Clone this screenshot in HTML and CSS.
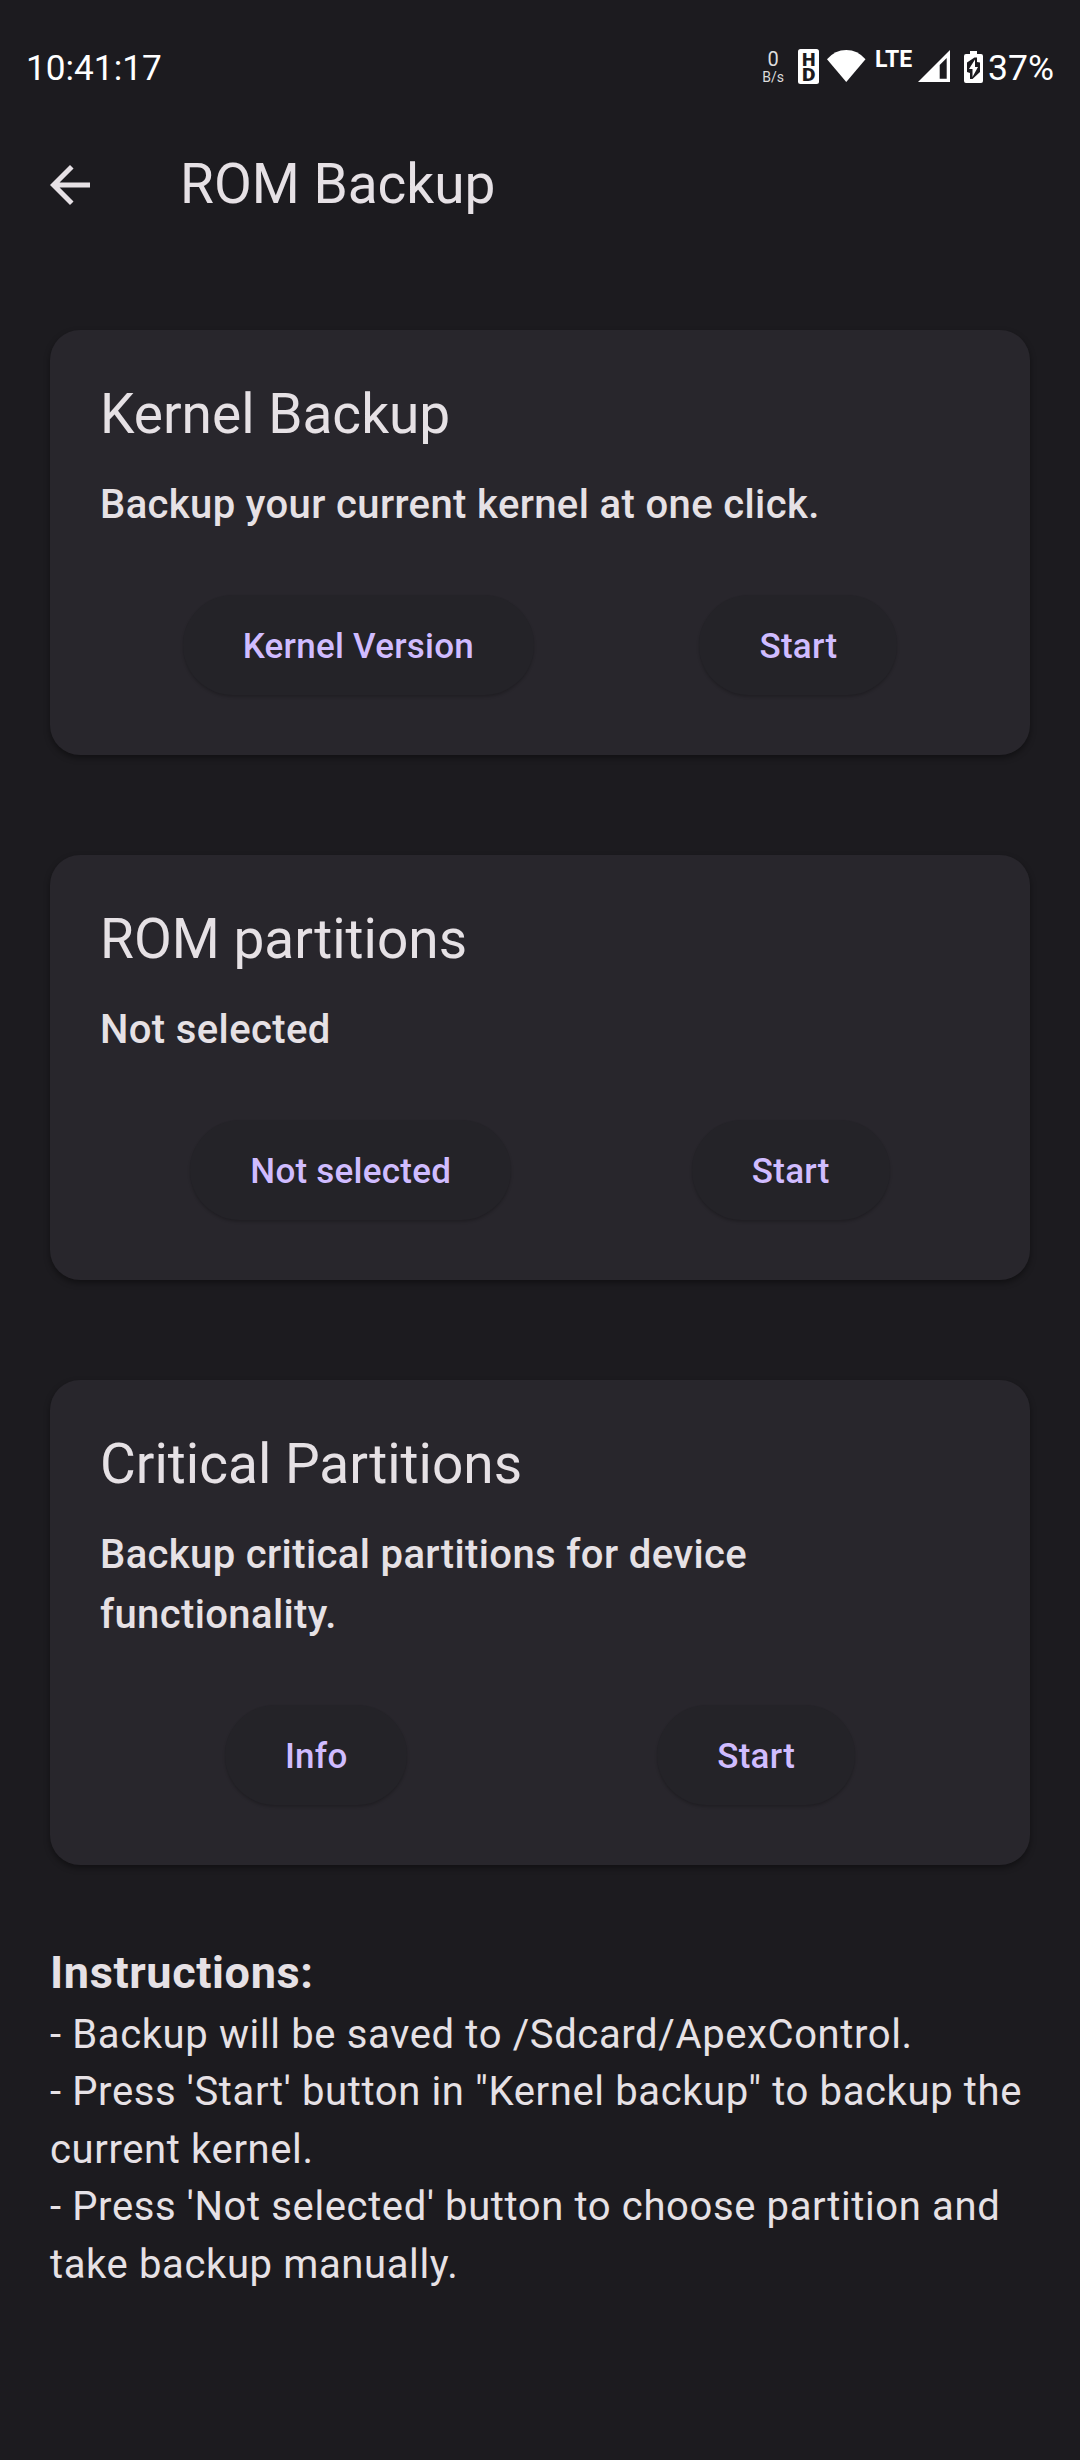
FILE: index.html
```html
<!DOCTYPE html>
<html lang="en">
<head>
<meta charset="utf-8">
<title>ROM Backup</title>
<link rel="stylesheet" href="styles.css">
</head>
<body>
<header class="status">
  <span class="clock">10:41:17</span>
  <div class="indicators">
    <span class="speed"><b>0</b><small>B/s</small></span>
    <svg class="hd" width="21" height="35" viewBox="0 0 21 35"><rect width="21" height="35" rx="2.500" fill="#fff"/><text x="4" y="16.600" textLength="13.500" lengthAdjust="spacingAndGlyphs">H</text><text x="4" y="32.300" textLength="13.500" lengthAdjust="spacingAndGlyphs">D</text></svg>
    <svg class="wifi" width="38.500" height="32" viewBox="0 0 38.500 32"><path d="M0 9.200Q8 0 19.250 0T38.500 9.200L19.250 32z" fill="#fff"/></svg>
    <span class="lte">LTE</span>
    <svg class="signal" width="32" height="32" viewBox="0 0 32 32"><path d="M32 0v32H0z" fill="#fff"/><path d="M28.700 8v20.700h-7V15z" fill="#1c1b1f"/></svg>
    <svg class="battery" width="19" height="32" viewBox="0 0 19 32"><path d="M6 0h7v3h4q2 0 2 2v25q0 2-2 2H2q-2 0-2-2V5q0-2 2-2h4z" fill="#fff"/><path d="M10.500 6.500L3 11.500V21l3 1v6h2.500L16 21V11.500l-3-.5V6.500z" fill="#1c1b1f"/><path d="M11 8.500L5 18h3.500v8L14 16h-3z" fill="#fff"/></svg>
    <span class="percent">37%</span>
  </div>
</header>
<nav class="bar">
  <svg class="back" width="40" height="40" viewBox="4 4 16 16"><path d="M20 11H7.830l5.590-5.590L12 4l-8 8 8 8 1.410-1.410L7.830 13H20z" fill="#e6e1e5"/></svg>
  <h1>ROM Backup</h1>
</nav>
<main>
  <section class="card">
    <h2>Kernel Backup</h2>
    <p>Backup your current kernel at one click.</p>
    <div class="actions"><button>Kernel Version</button><button>Start</button></div>
  </section>
  <section class="card">
    <h2>ROM partitions</h2>
    <p>Not selected</p>
    <div class="actions"><button>Not selected</button><button>Start</button></div>
  </section>
  <section class="card">
    <h2>Critical Partitions</h2>
    <p>Backup critical partitions for device functionality.</p>
    <div class="actions"><button>Info</button><button>Start</button></div>
  </section>
  <section class="instructions">
    <h3>Instructions:</h3>
    <p>- Backup will be saved to /Sdcard/ApexControl.<br>- Press 'Start' button in "Kernel backup" to backup the current kernel.<br>- Press 'Not selected' button to choose partition and take backup manually.</p>
  </section>
</main>
</body>
</html>
```
FILE: styles.css
```css
*{box-sizing:border-box}
body{margin:0;height:2460px;background:#1c1b1f;color:#e6e1e5;font-family:Roboto,sans-serif}
h1,h2,h3,p{margin:0;font-weight:400}
.status{height:130px;padding:47px 26px 0;display:flex;align-items:flex-start;justify-content:space-between;color:#fff;font-size:35.5px;line-height:42px}
.clock{font-size:35.2px}
.indicators{display:flex;align-items:flex-start}
.speed{width:22px;display:flex;flex-direction:column;align-items:center;margin:2px 14px 0 0;color:#ddd}
.speed b{font:400 20px/20px Roboto,sans-serif}
.speed small{font:14px/16px Roboto,sans-serif}
.hd{margin:2px 8px 0 0;overflow:visible}
.hd text{font:900 18px Roboto,sans-serif;fill:#1c1b1f}
.wifi{margin:3px 9.5px 0 0}
.lte{width:39px;font:700 23px/23px Roboto,sans-serif;margin:1px 3.5px 0 0}
.signal{margin:3px 14.5px 0 0}
.battery{margin:4px 5px 0 0}
.bar{height:110px;padding:0 50px;display:flex;align-items:center}
.bar h1{font-size:55px;line-height:64px;margin-left:90px;padding-bottom:2px}
main{padding:90px 50px 0}
.card{background:#28262c;border-radius:30px;padding:50px 50px 60px;margin-bottom:100px;box-shadow:0 3px 6px #0006}
h2{font-size:55px;line-height:68px}
.card p{font-size:40px;line-height:60px;font-weight:500;letter-spacing:.375px;margin-top:27px}
.actions{display:flex;justify-content:space-around;margin-top:60px}
button{height:100px;border:0;border-radius:50px;padding:2px 60px 0;background:#242328;color:#d0bcff;font:500 35px Roboto,sans-serif;letter-spacing:.25px;box-shadow:0 2px 3px #0003}
.instructions{margin-top:-25px}
.instructions h3{font-size:45px;font-weight:700;line-height:65px;letter-spacing:.625px}
.instructions p{font-size:40px;line-height:57.5px;letter-spacing:.625px;margin-top:.5px}
```
